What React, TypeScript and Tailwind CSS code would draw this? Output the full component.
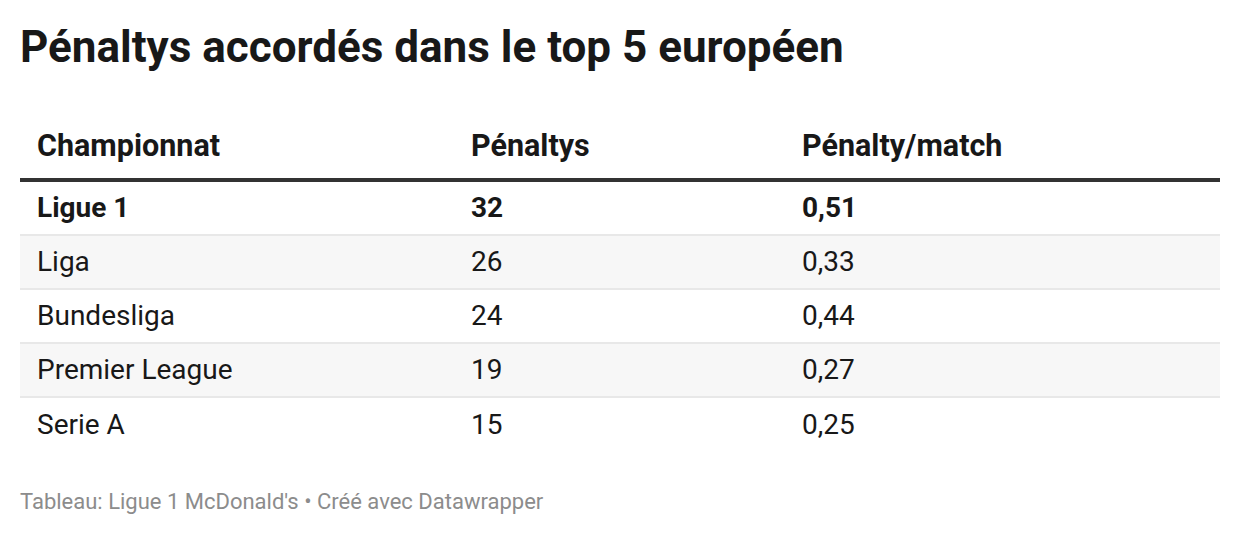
const rows = [
  { name: "Ligue 1", pen: "32", ratio: "0,51", bold: true },
  { name: "Liga", pen: "26", ratio: "0,33" },
  { name: "Bundesliga", pen: "24", ratio: "0,44" },
  { name: "Premier League", pen: "19", ratio: "0,27" },
  { name: "Serie A", pen: "15", ratio: "0,25" },
];

const App = () => {
  return (
    <div className="w-[1240px] h-[536px] bg-white px-5 pt-[21px] font-['Roboto',sans-serif] text-[#181818]">
      {/* Title */}
      <h1 className="text-[44px] leading-[52px] font-bold tracking-[0px]">
        Pénaltys accordés dans le top 5 européen
      </h1>

      {/* Table */}
      <div className="mt-[37px]">
        <div className="grid grid-cols-[434px_331px_1fr] text-[30.5px] font-bold h-[72px] pt-1 items-center border-b-4 border-[#333333]">
          <div className="pl-[17px]">Championnat</div>
          <div className="pl-[17px]">Pénaltys</div>
          <div className="pl-[17px]">Pénalty/match</div>
        </div>
        {rows.map((row, i) => (
          <div
            key={row.name}
            className={`grid grid-cols-[434px_331px_1fr] text-[28px] h-[54px] items-center ${
              i < rows.length - 1 ? "border-b-2 border-[#e8e8e8]" : ""
            } ${i % 2 === 1 ? "bg-[#f7f7f7]" : "bg-white"} ${row.bold ? "font-bold" : ""}`}
          >
            <div className="pl-[17px]">{row.name}</div>
            <div className="pl-[17px]">{row.pen}</div>
            <div className="pl-[17px]">{row.ratio}</div>
          </div>
        ))}
      </div>

      {/* Footer */}
      <p className="mt-[36px] text-[22px] leading-[28px] text-[#8c8c8c]">
        Tableau: Ligue 1 McDonald's • Créé avec Datawrapper
      </p>
    </div>
  );
};

export default App;
